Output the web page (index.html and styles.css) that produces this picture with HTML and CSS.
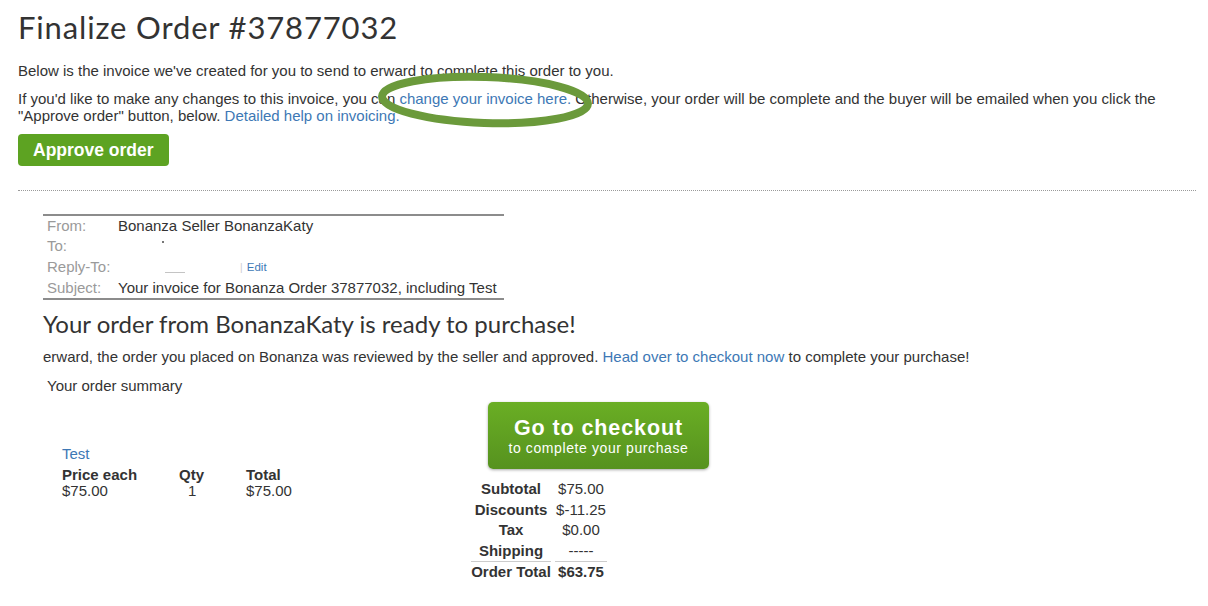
FILE: index.html
```html
<!DOCTYPE html>
<html lang="en">
<head>
    <meta charset="UTF-8">
    <title>Finalize Order #37877032</title>
    <link rel="stylesheet" href="styles.css">
</head>
<body>
    <!-- Page heading and intro -->
    <div class="page">
        <h1 class="page-title">Finalize Order #37877032</h1>
        <p class="intro">Below is the invoice we've created for you to send to erward to complete this order to you.</p>
        <p class="intro">If you'd like to make any changes to this invoice, you can <a href="#">change your invoice here.</a> Otherwise, your order will be complete and the buyer will be emailed when you click the<br>"Approve order" button, below. <a href="#">Detailed help on invoicing.</a></p>
        <div class="actions">
            <a class="approve-btn" href="#">Approve order</a>
        </div>

        <!-- green marker drawn round the link -->
        <svg class="marker" width="230" height="66" viewBox="0 0 230 66">
            <ellipse cx="115" cy="33" rx="103" ry="23" transform="rotate(2 115 33)" fill="none" stroke="#6b9a3b" stroke-width="8"/>
        </svg>

        <div class="divider"></div>

        <!-- Invoice preview -->
        <div class="invoice">
            <table class="mail-head">
                <tr><td class="label">From:</td><td>Bonanza Seller BonanzaKaty</td></tr>
                <tr><td class="label">To:</td><td><span class="blur dot"></span></td></tr>
                <tr><td class="label">Reply-To:</td><td><span class="blur dash"></span><span class="bar">|</span> <a class="edit" href="#">Edit</a></td></tr>
                <tr><td class="label">Subject:</td><td>Your invoice for Bonanza Order 37877032, including Test</td></tr>
            </table>

            <h2 class="ready-title">Your order from BonanzaKaty is ready to purchase!</h2>
            <p class="note">erward, the order you placed on Bonanza was reviewed by the seller and approved. <a href="#">Head over to checkout now</a> to complete your purchase!</p>
            <div class="summary-title">Your order summary</div>

            <div class="order-area">
                <div class="items">
                    <a class="item-name" href="#">Test</a>
                    <table class="item-table">
                        <tr><th class="c-price">Price each</th><th class="c-qty">Qty</th><th>Total</th></tr>
                        <tr><td>$75.00</td><td class="qty">1</td><td>$75.00</td></tr>
                    </table>
                </div>
                <div class="checkout">
                    <a class="checkout-btn" href="#">
                        <span class="big">Go to checkout</span>
                        <span class="small">to complete your purchase</span>
                    </a>
                    <table class="totals">
                        <tr><th>Subtotal</th><td>$75.00</td></tr>
                        <tr><th>Discounts</th><td>$-11.25</td></tr>
                        <tr><th>Tax</th><td>$0.00</td></tr>
                        <tr><th>Shipping</th><td>-----</td></tr>
                        <tr class="grand"><th>Order Total</th><td>$63.75</td></tr>
                    </table>
                </div>
            </div>
        </div>
    </div>
</body>
</html>
```

FILE: styles.css
```css
body {
    margin: 0;
    padding: 0;
    background: #ffffff;
    color: #333333;
    font-family: "Liberation Sans", Arial, sans-serif;
    font-size: 15px;
}

a {
    color: #3d78b5;
    text-decoration: none;
}

.page {
    position: relative;
    padding: 8px 12px 0 18px;
}

/* Headings use a round geometric face */
.page-title {
    margin: 0 0 16px 0;
    font-family: "Lato", sans-serif;
    font-weight: 400;
    font-size: 31px;
    line-height: 38px;
    color: #333333;
    letter-spacing: 0.85px;
}

.intro {
    margin: 0 0 11px 0;
    line-height: 17px;
}

.actions {
    display: flex;
    margin-top: -1px;
}

.approve-btn {
    padding: 0 15px;
    height: 32px;
    line-height: 32px;
    background-color: #5da322;
    color: #ffffff;
    font-weight: bold;
    font-size: 17.5px;
    border-radius: 4px;
}

.marker {
    position: absolute;
    left: 370px;
    top: 67px;
}

.divider {
    margin-top: 24px;
    border-top: 1px dotted #9a9a9a;
}

/* Invoice preview */
.invoice {
    padding-left: 25px;
    padding-top: 23px;
}

.mail-head {
    width: 461px;
    border-collapse: collapse;
    border-top: 2px solid #8c8c8c;
    border-bottom: 2px solid #8c8c8c;
}

.mail-head td {
    padding: 0 0 0 4px;
    height: 20px;
    line-height: 20px;
    white-space: nowrap;
}

.mail-head td.label {
    width: 67px;
    color: #9a9a9a;
}

.blur {
    display: inline-block;
    vertical-align: middle;
}

.blur.dot {
    width: 2px;
    height: 2px;
    margin-left: 44px;
    margin-top: -10px;
    background: #777777;
}

.blur.dash {
    width: 20px;
    height: 1px;
    margin-left: 47px;
    margin-top: 10px;
    margin-right: 55px;
    background: #c4c4c4;
}

.bar {
    color: #cccccc;
    font-size: 10px;
}

.edit {
    font-size: 11.5px;
}

.ready-title {
    margin: 10px 0 0 0;
    font-family: "Lato", sans-serif;
    font-weight: 400;
    font-size: 24px;
    line-height: 28px;
    color: #333333;
}

.note {
    margin: 11px 0 0 0;
    line-height: 16px;
}

.summary-title {
    margin: 13px 0 0 4px;
    line-height: 16px;
}

.order-area {
    display: flex;
    margin-top: 8px;
}

.items {
    width: 428px;
    padding-left: 19px;
    padding-top: 44px;
    box-sizing: border-box;
}

.item-name {
    display: block;
    line-height: 16px;
}

.item-table {
    border-collapse: collapse;
    margin-top: 5px;
}

.item-table th,
.item-table td {
    padding: 0;
    line-height: 16px;
    text-align: left;
}

.item-table .c-price {
    width: 117px;
}

.item-table .c-qty {
    width: 67px;
}

.item-table td.qty {
    padding-left: 9px;
}

.checkout {
    display: flex;
    flex-direction: column;
    align-items: flex-start;
}

.checkout-btn {
    display: flex;
    flex-direction: column;
    align-items: center;
    justify-content: center;
    margin-left: 17px;
    width: 221px;
    height: 67px;
    border-radius: 5px;
    background: linear-gradient(#6aae24, #56921f);
    box-shadow: 0 1px 3px rgba(0, 0, 0, 0.35);
    color: #ffffff;
}

.checkout-btn .big {
    font-weight: bold;
    font-size: 21.5px;
    line-height: 24px;
    letter-spacing: 0.9px;
}

.checkout-btn .small {
    font-size: 14px;
    line-height: 16px;
    letter-spacing: 0.6px;
}

.totals {
    border-collapse: separate;
    border-spacing: 4px 0;
    margin: 10px 0 0 -4px;
}

.totals th,
.totals td {
    padding: 0;
    height: 20.5px;
    line-height: 20px;
    text-align: center;
    white-space: nowrap;
}

.totals th {
    width: 80px;
    font-weight: bold;
}

.totals td {
    width: 52px;
}

.totals .grand th,
.totals .grand td {
    border-top: 1px solid #cccccc;
    font-weight: bold;
}
```
